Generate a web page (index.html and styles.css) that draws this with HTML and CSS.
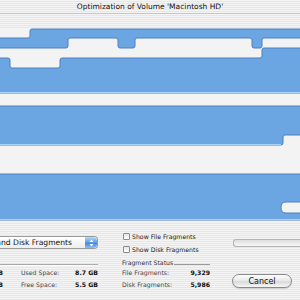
FILE: index.html
```html
<!DOCTYPE html>
<html lang="en">
<head>
    <meta charset="UTF-8">
    <title>Optimization of Volume 'Macintosh HD'</title>
    <link rel="stylesheet" href="styles.css">
</head>
<body>
    <div class="window">
        <div class="titlebar">Optimization of Volume 'Macintosh HD'</div>

        <div class="map">
            <svg class="map-svg" width="300" height="196" viewBox="0 28 300 196">
                <rect class="map-bg" x="0" y="29" width="300" height="194"/>
                <path class="used" d="M-2 38H28Q30 38 30 36V31Q30 29 32 29H302V38H264Q262 38 262 40V46Q262 48 260 48H254Q252 48 252 46V40Q252 38 250 38H137Q135 38 135 40V46Q135 48 133 48H120Q118 48 118 46V40Q118 38 116 38H70Q68 38 68 40V46Q68 48 66 48H-2Z"/>
                <path class="used" d="M-2 58H8Q10 58 10 60V66Q10 68 12 68H58Q60 68 60 66V60Q60 58 62 58H260Q262 58 262 56V50Q262 48 264 48H302V93H-2Z"/>
                <path class="used" d="M-2 106H302V135H285Q283 135 283 137V143Q283 145 281 145H-2Z"/>
                <path class="used" d="M-2 174H302V202H286Q281 202 281 207.5Q281 213 286 213H302V220H-2Z"/>
                <path class="lip" d="M0 92.5H300M0 144.5H281M0 219.5H300"/>
            </svg>
        </div>

        <div class="panel">
            <div class="col-left">
                <div class="popup">
                    <span class="popup-label">Files and Disk Fragments</span>
                    <span class="stepper">
                        <svg width="5" height="8" viewBox="0 0 5 8">
                            <path d="M2.5 0.5L4.5 3H0.5Z M2.5 7.5L4.5 5H0.5Z" fill="#fff"/>
                        </svg>
                    </span>
                </div>
                <div class="sep"></div>
                <div class="stats stats-left">
                    <span class="label">Capacity:</span><span class="value">14.2 GB</span>
                    <span class="label label-2">Used Space:</span><span class="value">8.7 GB</span>
                    <span class="label">Largest:</span><span class="value">2.1 GB</span>
                    <span class="label label-2">Free Space:</span><span class="value">5.5 GB</span>
                </div>
            </div>

            <div class="col-mid">
                <label class="check"><span class="box"></span>Show File Fragments</label>
                <label class="check"><span class="box"></span>Show Disk Fragments</label>
                <div class="group-title"><span>Fragment Status</span><span class="rule"></span></div>
                <div class="stats stats-mid">
                    <span class="label">File Fragments:</span><span class="value">9,329</span>
                    <span class="label">Disk Fragments:</span><span class="value">5,986</span>
                </div>
            </div>

            <div class="col-right">
                <div class="progress"></div>
                <button type="button" class="cancel">Cancel</button>
            </div>
        </div>
    </div>
</body>
</html>
```

FILE: styles.css
```css
html, body {
    margin: 0;
    overflow: hidden;
}

body {
    width: 300px;
    height: 300px;
    font-family: "DejaVu Sans", "Liberation Sans", sans-serif;
    color: #222;
    background: repeating-linear-gradient(to bottom, #f4f4f4 0, #f4f4f4 1px, #e7e7e7 1px, #e7e7e7 2px);
}

.titlebar {
    height: 13px;
    line-height: 13px;
    text-align: center;
    font-size: 7.5px;
    color: #111;
    border-bottom: 1px solid #c6c6c6;
}

.map {
    margin-top: 14px;
    height: 196px;
}

.map-svg {
    display: block;
}

.map-bg {
    fill: #f3f3f3;
}

.used {
    fill: #6ba6e3;
    stroke: #4f7fc2;
    stroke-width: 1;
}

.lip {
    fill: none;
    stroke: #a6d3f7;
    stroke-width: 1;
}

/* bottom controls */

.panel {
    display: flex;
    height: 76px;
}

.col-left {
    flex: none;
    width: 170px;
    margin-left: -72px;
    padding-top: 12px;
    display: flex;
    flex-direction: column;
}

.popup {
    height: 13px;
    box-sizing: border-box;
    display: flex;
    align-items: center;
    justify-content: flex-end;
    border: 1px solid #9c9c9c;
    border-left: none;
    border-radius: 0 4px 4px 0;
    background: linear-gradient(#ffffff, #ededed);
    font-size: 7.6px;
    color: #111;
    white-space: nowrap;
    overflow: hidden;
}

.stepper {
    flex: none;
    width: 12px;
    height: 11px;
    margin-left: 13px;
    display: flex;
    align-items: center;
    justify-content: center;
    border-radius: 0 4px 4px 0;
    background: linear-gradient(#b6dafa, #5b9be6 50%, #3f86dc 55%, #86c0f4);
}

.stepper svg {
    display: block;
}

.sep {
    margin-top: 15px;
    height: 1px;
    background: #a9a9a9;
    border-bottom: 1px solid #fbfbfb;
}

.stats {
    display: grid;
    grid-auto-rows: 12px;
    line-height: 12px;
    font-size: 6.2px;
    white-space: nowrap;
}

.stats .label {
    color: #454545;
}

.stats .value {
    text-align: right;
    color: #111;
    font-weight: bold;
}

.stats-left {
    margin-top: 1px;
    grid-template-columns: 45px 30px 63px 32px;
}

.label-2 {
    padding-left: 18px;
}

.col-mid {
    flex: none;
    width: 88px;
    margin-left: 24px;
    padding-top: 6px;
}

.check {
    height: 13px;
    display: flex;
    align-items: center;
    font-size: 6.2px;
    color: #222;
    white-space: nowrap;
}

.box {
    width: 7px;
    height: 7px;
    box-sizing: border-box;
    margin-left: 1px;
    margin-right: 2px;
    border: 1px solid #8c8c8c;
    border-radius: 1px;
    background: linear-gradient(#e6e6e6, #ffffff);
}

.group-title {
    height: 11px;
    display: flex;
    align-items: flex-end;
    font-size: 6.2px;
    line-height: 9px;
    color: #333;
    white-space: nowrap;
}

.group-title .rule {
    flex: 1;
    margin: 0 0 2px 1px;
    border-bottom: 1px solid #9a9a9a;
}

.stats-mid {
    grid-template-columns: 1fr auto;
}

.col-right {
    flex: none;
    width: 80px;
    margin-left: 22px;
    padding-top: 15px;
}

.progress {
    height: 8px;
    box-sizing: border-box;
    margin-left: 1px;
    border: 1px solid #b4b4b4;
    border-right: none;
    border-radius: 3px 0 0 3px;
    background: linear-gradient(#dedede, #f7f7f7);
}

.cancel {
    display: block;
    width: 60px;
    height: 14px;
    margin-top: 27px;
    padding: 0;
    border: 1px solid #8a8a8a;
    border-radius: 7px;
    background: linear-gradient(#ffffff, #e6e6e6 50%, #d9d9d9 55%, #f7f7f7);
    box-shadow: 0 1px 1px rgba(0, 0, 0, 0.15);
    font-family: "DejaVu Sans", sans-serif;
    font-size: 8px;
    color: #111;
}
```
